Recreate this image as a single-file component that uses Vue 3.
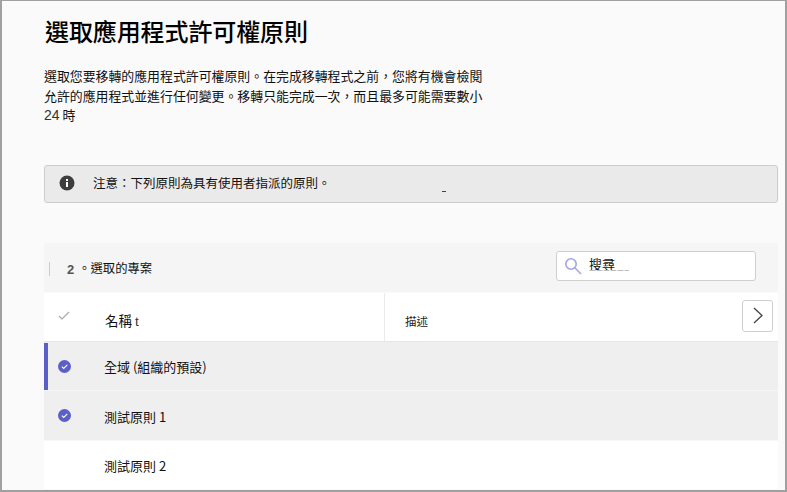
<template>
  <div class="page">
    <h1 class="title">選取應用程式許可權原則</h1>
    <p class="desc">選取您要移轉的應用程式許可權原則。在完成移轉程式之前，您將有機會檢閱<br />允許的應用程式並進行任何變更。移轉只能完成一次，而且最多可能需要數小<br /><span class="num">24</span> 時</p>
    <div class="notice">
      <svg class="info" width="16" height="16" viewBox="0 0 16 16">
        <circle cx="8" cy="8" r="7.5" fill="#3d3d3d" />
        <rect x="7" y="7" width="2" height="5" fill="#fff" />
        <rect x="7" y="4" width="2" height="2" fill="#fff" />
      </svg>
      <span class="notice-text">注意：下列原則為具有使用者指派的原則。</span>
      <span class="notice-dash"></span>
    </div>
    <div class="table">
      <div class="toolbar">
        <span class="sep"></span>
        <b class="count">2</b>
        <span class="selected">。選取的專案</span>
        <div class="search">
          <svg width="18" height="18" viewBox="0 0 18 18" fill="none" stroke="#a3a6e4" stroke-width="1.6">
            <circle cx="7" cy="7" r="5.2" />
            <path d="M10.8 10.8 L17 17" />
          </svg>
          <span class="search-text">搜尋</span>
          <span class="search-dash"></span>
        </div>
      </div>
      <div class="row head">
        <div class="check">
          <svg width="12" height="9" viewBox="0 0 12 9" fill="none" stroke="#a8a8a8" stroke-width="1.2">
            <path d="M1 5 L4 8 L11 1" />
          </svg>
        </div>
        <div class="name-head">名稱 <span class="t">t</span></div>
        <div class="desc-head">描述</div>
        <button class="next">
          <svg width="10" height="17" viewBox="0 0 10 17" fill="none" stroke="#444" stroke-width="1.3">
            <path d="M1 1 L9 8.5 L1 16" />
          </svg>
        </button>
      </div>
      <div v-for="r in rows" :key="r.name" class="row" :class="{ sel: r.sel, first: r.bar }">
        <div class="check">
          <svg v-if="r.sel" width="13" height="13" viewBox="0 0 13 13" fill="none">
            <circle cx="6.5" cy="6.5" r="6.5" fill="#5b5fc7" />
            <path d="M3.8 6.7 L5.7 8.4 L9.3 4.8" stroke="#fff" stroke-width="1.1" />
          </svg>
        </div>
        <div class="name">{{ r.name }}</div>
      </div>
    </div>
  </div>
</template>

<script setup>
const rows = [
  { name: '全域 (組織的預設)', sel: true, bar: true },
  { name: '測試原則 1', sel: true, bar: false },
  { name: '測試原則 2', sel: false, bar: false },
]
</script>

<style>
html, body { margin: 0; background: #fafafa; }
</style>

<style scoped>
.page {
  box-sizing: border-box;
  width: 787px;
  height: 492px;
  overflow: hidden;
  background: #fafafa;
  border-top: 1px solid #a0a0a0;
  border-left: 2px solid #a0a0a0;
  border-right: 2px solid #a0a0a0;
  border-bottom: 2px solid #a0a0a0;
  padding: 0 7px 0 42px;
  font-family: "Noto Sans CJK TC", "Liberation Sans", sans-serif;
  color: #111;
}
.title {
  margin: 14px 0 0 1px;
  font-size: 24px;
  line-height: 32px;
  font-weight: 500;
  letter-spacing: -0.1px;
  color: #000;
}
.desc {
  margin: 19px 0 0;
  font-size: 12.9px;
  line-height: 19.5px;
  white-space: nowrap;
}
.num { font-family: "Liberation Sans", sans-serif; color: #333; font-size: 14px; }
.notice {
  margin-top: 39px;
  height: 38px;
  box-sizing: border-box;
  background: #eaeaea;
  border: 1px solid #cdcdcd;
  border-radius: 3px;
  display: flex;
  align-items: center;
  padding: 0 0 2px 14px;
  position: relative;
  font-size: 12.5px;
}
.notice-text { margin-left: 18px; }
.notice-dash {
  position: absolute;
  left: 397px;
  top: 25px;
  width: 4px;
  height: 1px;
  background: #444;
}
.table { margin-top: 40px; }
.toolbar {
  height: 49px;
  background: #f5f5f5;
  border-radius: 3px 3px 0 0;
  display: flex;
  align-items: center;
  font-size: 12.3px;
  position: relative;
}
.sep { width: 1px; height: 14px; background: #ccc; margin: 4px 0 0 5px; }
.count {
  margin: 4px 0 0 17px;
  font-family: "Liberation Sans", sans-serif;
  font-size: 13px;
  color: #555;
}
.selected { margin: 2px 0 0 4px; }
.search {
  margin: -3px 22px 0 auto;
  width: 200px;
  height: 30px;
  box-sizing: border-box;
  background: #fff;
  border: 1px solid #cfcfcf;
  border-radius: 3px;
  display: flex;
  align-items: center;
  padding-left: 7px;
  position: relative;
}
.search-text { margin-left: 7px; margin-top: -5px; font-size: 13px; color: #111; }
.search-dash {
  position: absolute;
  left: 33px;
  top: 18px;
  width: 39px;
  height: 1px;
  background: repeating-linear-gradient(90deg, #bbb 0 5px, #e8e8e8 5px 7px);
}
.row {
  height: 49.5px;
  display: flex;
  align-items: center;
  font-size: 13px;
  background: #fff;
  border-bottom: 1px solid #f7f7f7;
  box-sizing: border-box;
  position: relative;
}
.row.sel { background: #efefef; }
.row.first::before {
  content: "";
  position: absolute;
  left: 0;
  top: 1px;
  bottom: 0;
  width: 4px;
  background: #5b5fc7;
}
.head { margin-top: 1px; height: 49px; border-bottom: 1px solid #e6e6e6; }
.check { width: 60px; padding-left: 14px; box-sizing: border-box; display: flex; }
.row.sel .check { margin-top: 1px; }
.head .check { margin-top: -3px; }
.name-head { width: 281px; padding-left: 1px; font-size: 13.5px; margin-top: 2px; box-sizing: border-box; height: 49px; line-height: 54px; border-right: 1px solid #eaeaea; }
.t { font-family: "Liberation Sans", sans-serif; color: #333; }
.desc-head { margin-left: 20px; margin-top: 8px; font-size: 11.5px; color: #222; }
.next {
  position: absolute;
  right: 5px;
  top: 7px;
  width: 31px;
  height: 32px;
  padding: 0;
  background: #fff;
  border: 1px solid #cfcfcf;
  border-radius: 3px;
  display: flex;
  align-items: center;
  justify-content: center;
}
.name { margin-top: 2px; }
</style>
